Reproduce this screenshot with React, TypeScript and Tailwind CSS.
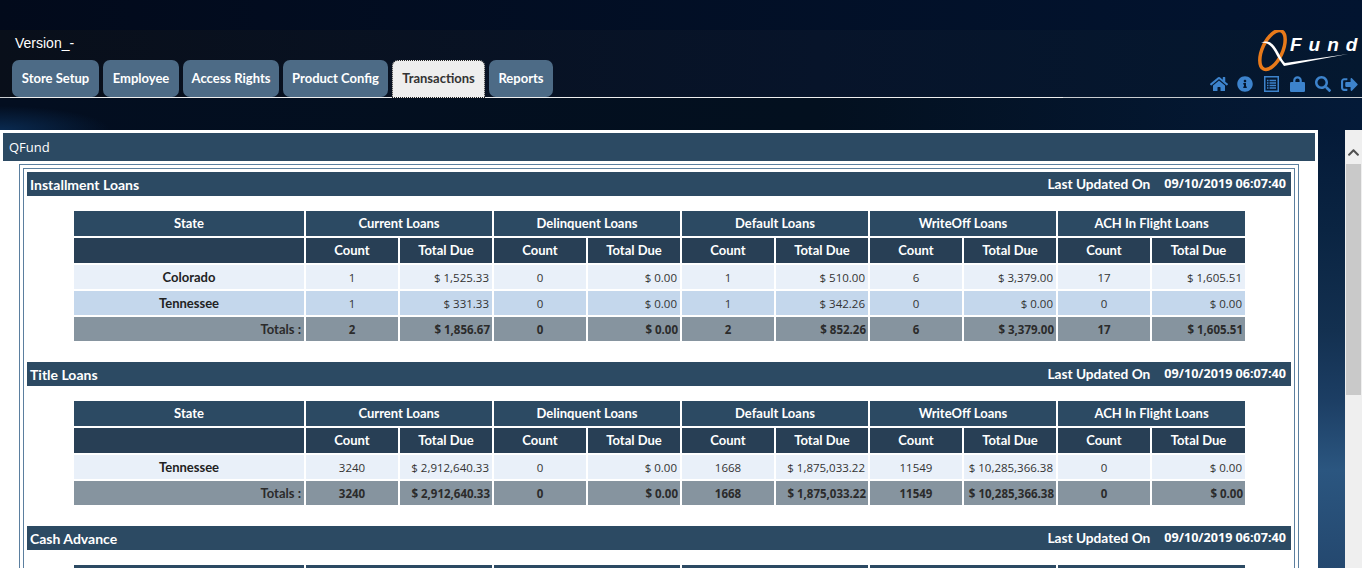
import { FaHome, FaInfoCircle, FaSearch, FaSignOutAlt, FaChevronUp } from "react-icons/fa";

const font = "font-['Open_Sans',sans-serif]";
const heading = "font-['Lato',sans-serif] font-bold";

const tabs = [
  { label: "Store Setup", width: "w-[87px]" },
  { label: "Employee", width: "w-[76px]" },
  { label: "Access Rights", width: "w-[96px]" },
  { label: "Product Config", width: "w-[105px]" },
  { label: "Transactions", width: "w-[93px]" },
  { label: "Reports", width: "w-[64px]" },
];
const groups = ["Current Loans", "Delinquent Loans", "Default Loans", "WriteOff Loans", "ACH In Flight Loans"];

interface Section {
  title: string;
  rows: string[][];
  totals?: string[];
}

const sections: Section[] = [
  {
    title: "Installment Loans",
    rows: [
      ["Colorado", "1", "$ 1,525.33", "0", "$ 0.00", "1", "$ 510.00", "6", "$ 3,379.00", "17", "$ 1,605.51"],
      ["Tennessee", "1", "$ 331.33", "0", "$ 0.00", "1", "$ 342.26", "0", "$ 0.00", "0", "$ 0.00"],
    ],
    totals: ["2", "$ 1,856.67", "0", "$ 0.00", "2", "$ 852.26", "6", "$ 3,379.00", "17", "$ 1,605.51"],
  },
  {
    title: "Title Loans",
    rows: [["Tennessee", "3240", "$ 2,912,640.33", "0", "$ 0.00", "1668", "$ 1,875,033.22", "11549", "$ 10,285,366.38", "0", "$ 0.00"]],
    totals: ["3240", "$ 2,912,640.33", "0", "$ 0.00", "1668", "$ 1,875,033.22", "11549", "$ 10,285,366.38", "0", "$ 0.00"],
  },
  { title: "Cash Advance", rows: [] },
];

const gridCols = "grid grid-cols-[230px_repeat(9,92px)_93px] gap-[2px]";

function Logo() {
  return (
    <div className="relative h-[44px] w-[104px]">
      <svg viewBox="0 0 104 44" className="absolute inset-0 h-full w-full">
        <ellipse cx="16.5" cy="20" rx="10" ry="21" transform="rotate(25 16.5 20)" fill="none" stroke="#e87a1a" strokeWidth="3.5" />
        <path d="M5 13 C13 9 18 14 22 22 C25 28 27 31 29 33 L92 24 L28 36 C25 32 22 28 19 22 C15 15 11 12 5 13Z" fill="#ffffff" />
      </svg>
      <span className="absolute left-[34px] top-[4px] font-['Liberation_Sans',sans-serif] text-[19px] leading-[22px] font-bold tracking-[7px] text-white italic">
        Fund
      </span>
    </div>
  );
}

function ListIcon() {
  return (
    <svg viewBox="0 0 15 16" className="h-[16px] w-[15px]" fill="none" stroke="#3d83cc">
      <rect x="0.75" y="0.75" width="13.5" height="14.5" strokeWidth="1.5" />
      <path d="M3 4.5h1.5M5.5 4.5H12M3 7h1.5M5.5 7H12M3 9.5h1.5M5.5 9.5H12M3 12h1.5M5.5 12H12" strokeWidth="1.3" />
    </svg>
  );
}

function LockIcon() {
  return (
    <svg viewBox="0 0 15 16" className="h-[16px] w-[15px]" fill="#3d83cc">
      <path d="M3.2 7V4.6C3.2 2 5.1 0.3 7.5 0.3S11.8 2 11.8 4.6V7H9.6V4.6C9.6 3.3 8.7 2.5 7.5 2.5S5.4 3.3 5.4 4.6V7Z" />
      <rect x="0" y="6" width="15" height="10" rx="1.2" />
    </svg>
  );
}

function SectionTable({ section }: { section: Section }) {
  return (
    <>
      <div className={`${heading} flex h-[24px] items-center justify-between bg-[#2c4a63] pl-[3px] pr-[5px] text-[14px] text-white`}>
        <span>{section.title}</span>
        <span className="flex items-center gap-[14px]">
          <span className="text-[13.7px]">Last Updated On</span>
          <span className={`${font} text-[12.6px] font-bold`}>09/10/2019 06:07:40</span>
        </span>
      </div>
      <div className="pl-[47px] pt-[15px] pb-[21px]">
        <div className={`${gridCols} ${heading} text-[13px] text-white`}>
          <div className="flex h-[25px] items-center justify-center bg-[#2c4a63] pt-[1px]">State</div>
          {groups.map((g) => (
            <div key={g} className="col-span-2 flex h-[25px] items-center justify-center bg-[#2c4a63] pt-[1px]">
              {g}
            </div>
          ))}
          <div className="h-[25px] bg-[#283f55]" />
          {groups.map((g) => (
            <div key={g} className="col-span-2 grid grid-cols-subgrid">
              <div className="flex h-[25px] items-center justify-center bg-[#283f55] pt-[1px]">Count</div>
              <div className="flex h-[25px] items-center justify-center bg-[#283f55] pt-[1px]">Total Due</div>
            </div>
          ))}
          {section.rows.map((row, r) => (
            <div key={row[0]} className="col-span-full grid grid-cols-subgrid text-[#333]">
              {row.map((cell, i) => (
                <div
                  key={i}
                  className={`flex h-[24px] items-center ${r % 2 === 0 ? "bg-[#e9f0f9]" : "bg-[#c4d7ec]"} ${
                    i === 0
                      ? "justify-center pt-[1px] text-[13px] text-[#222]"
                      : `${font} pt-[1px] text-[11.5px] font-normal ${i % 2 === 1 ? "justify-center" : "justify-end pr-[3px]"}`
                  }`}
                >
                  {cell}
                </div>
              ))}
            </div>
          ))}
          {section.totals && (
            <div className="col-span-full grid grid-cols-subgrid text-[#2b2b2b]">
              <div className="flex h-[24px] items-center justify-end bg-[#86949f] pr-[3px] pt-[1px] text-[13px]">Totals :</div>
              {section.totals.map((cell, i) => (
                <div
                  key={i}
                  className={`${font} flex h-[24px] items-center bg-[#86949f] pt-[1px] text-[11.5px] font-bold ${
                    i % 2 === 0 ? "justify-center" : "justify-end pr-[2px]"
                  }`}
                >
                  {cell}
                </div>
              ))}
            </div>
          )}
        </div>
      </div>
    </>
  );
}

export default function App() {
  return (
    <div className={`${font} h-[568px] overflow-hidden bg-white`}>
      <div className="h-[568px] w-[1362px] overflow-hidden bg-[linear-gradient(180deg,#020b1c_0px,#041a38_130px,#0a2442_230px,#133050_330px,#1c3e64_400px,#2b5680_470px,#24486f_568px)]">
        <div className="h-[30px] bg-[linear-gradient(90deg,#020a1b,#021430)]" />
        {/* Header band */}
        <div className="flex h-[67px] justify-between bg-[linear-gradient(90deg,#090f1a,#07142a_60%,#041830)]">
          <div className="flex flex-col">
            <div className="pl-[15px] pt-[5px] font-['Liberation_Sans',sans-serif] text-[14px] leading-[16px] text-white">Version_-</div>
            <div className="relative z-10 mt-[9px] flex items-start gap-[4px] pl-[12px]">
              {tabs.map((t) => (
                <div
                  key={t.label}
                  className={`${heading} ${t.width} flex items-center justify-center text-[13px] ${
                    t.label === "Transactions"
                      ? "h-[38px] rounded-t-[6px] border border-dotted border-[#222] bg-[#eeeeee] text-[#333]"
                      : "h-[37px] rounded-[7px] bg-[#4d6b86] text-white"
                  }`}
                >
                  {t.label}
                </div>
              ))}
            </div>
          </div>
          <div className="flex flex-col items-end">
            <div className="pr-[2px]">
              <Logo />
            </div>
            <div className="mt-[2px] flex h-[16px] text-[#3d83cc]">
              <div className="flex w-[26px] items-center justify-center"><FaHome size={18} /></div>
              <div className="flex w-[26px] items-center justify-center"><FaInfoCircle size={16} /></div>
              <div className="flex w-[26px] items-center justify-center"><ListIcon /></div>
              <div className="flex w-[26px] items-center justify-center"><LockIcon /></div>
              <div className="flex w-[26px] items-center justify-center"><FaSearch size={16} /></div>
              <div className="flex w-[26px] items-center justify-center"><FaSignOutAlt size={17} /></div>
            </div>
          </div>
        </div>
        {/* Rule under the tabs */}
        <div className="flex h-[1px] bg-[#c8ccd0]">
          <div className="ml-[10px] w-[1053px] bg-[#eeeeee]" />
        </div>
        <div className="h-[32px] bg-[radial-gradient(ellipse_110px_24px_at_0_100%,#0a2a50,transparent),linear-gradient(90deg,#030e20,#03101f_60%,#041a38)]" />
        <div className="flex">
          {/* Main panel */}
          <div className="h-[438px] w-[1318px] overflow-hidden bg-white p-[3px]">
            <div className="flex h-[28px] items-center bg-[#2c4a63] pl-[6px] pt-[1px] text-[13px] text-white">QFund</div>
            <div className="ml-[16px] mt-[3px] h-[500px] w-[1280px] border border-[#5b7f9f] p-[3px]">
              <div className="h-full border border-[#5b7f9f] p-[3px]">
                {sections.map((s) => (
                  <SectionTable key={s.title} section={s} />
                ))}
              </div>
            </div>
          </div>
          <div className="w-[27px]" />
          {/* Scrollbar */}
          <div className="flex h-[438px] w-[17px] flex-col items-center bg-[#efefef]">
            <div className="flex h-[34px] items-center justify-center pt-[10px] text-[#505050]">
              <FaChevronUp size={13} />
            </div>
            <div className="h-[231px] w-[15px] bg-[#c9c9c9]" />
          </div>
        </div>
      </div>
    </div>
  );
}
